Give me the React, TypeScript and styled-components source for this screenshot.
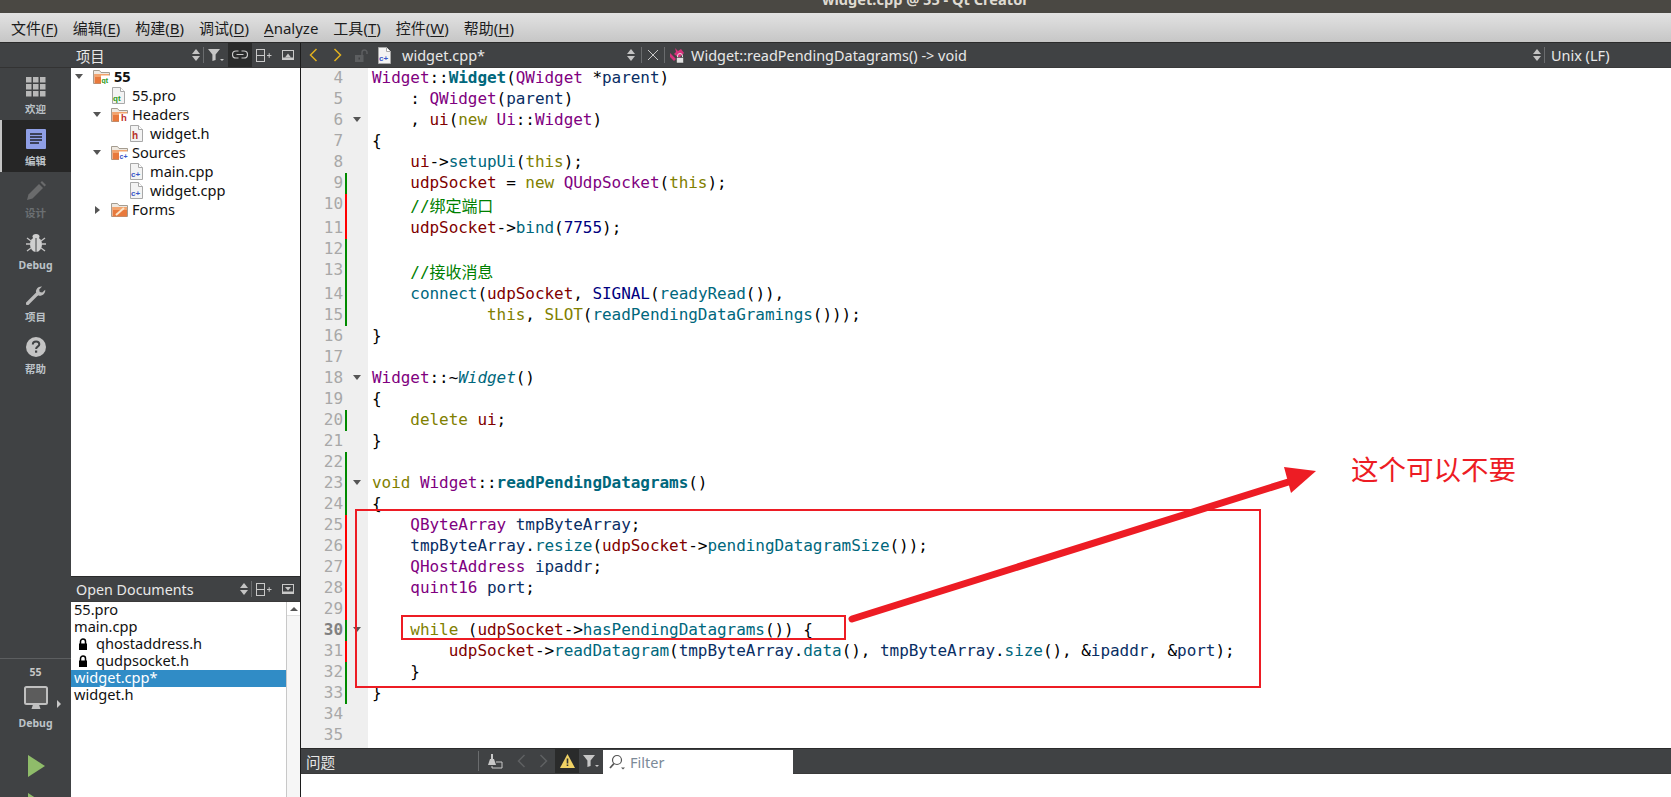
import React from "react";
import styled, { createGlobalStyle } from "styled-components";

const UI = `"Noto Sans", "Noto Sans CJK SC", sans-serif`;
const MONO = `"DejaVu Sans Mono", "Noto Sans CJK SC", monospace`;

const Global = createGlobalStyle`
  html, body { margin: 0; padding: 0; background: #fff; overflow: hidden; }
`;

const Root = styled.div`
  position: relative;
  width: 1671px;
  height: 797px;
  overflow: hidden;
  display: flex;
  flex-direction: column;
  font-family: ${UI};
`;
const TitleBar = styled.div`
  height: 13px;
  flex: none;
  background: #4a4843;
  overflow: hidden;
  padding-left: 822px;
`;
const TitleText = styled.div`
  margin-top: -11px;
  line-height: 20px;
  font-size: 14.6px;
  font-weight: 700;
  color: #dfdbd2;
  white-space: nowrap;
`;
const MenuBar = styled.div`
  height: 29px;
  flex: none;
  display: flex;
  align-items: center;
  padding-left: 11px;
  gap: 15px;
  background: linear-gradient(#e2e2e2, #c6c6c6);
`;
const MenuItem = styled.span`
  font-size: 15px;
  color: #1c1c1c;
  white-space: nowrap;
  u { text-underline-offset: 2px; }
`;
const Body = styled.div`
  flex: 1;
  min-height: 0;
  display: flex;
  border-top: 1px solid #2b2b2b;
`;
const Rail = styled.div`
  width: 71px;
  flex: none;
  background: #404244;
  display: flex;
  flex-direction: column;
  overflow: hidden;
`;
const RailHead = styled.div`
  height: 24px;
  flex: none;
  border-bottom: 1px solid #333;
`;
const RailItem = styled.div<{ $active?: boolean; $dim?: boolean }>`
  height: 52px;
  flex: none;
  box-sizing: border-box;
  display: flex;
  flex-direction: column;
  align-items: center;
  padding-top: 9px;
  gap: 6px;
  background: ${(p) => (p.$active ? "#262626" : "transparent")};
  border-left: 2px solid ${(p) => (p.$active ? "#c4c4c4" : "transparent")};
  opacity: ${(p) => (p.$dim ? 0.35 : 1)};
  svg { display: block; margin-left: -2px; }
`;
const RailLabel = styled.span`
  font-size: 10.5px;
  line-height: 13px;
  font-weight: 700;
  color: #bcc2c8;
  margin-left: -2px;
`;
const Kit = styled.div`
  margin-top: auto;
  height: 139px;
  flex: none;
  border-top: 1px solid #5c5e60;
  box-sizing: border-box;
  display: flex;
  flex-direction: column;
  align-items: center;
  overflow: hidden;
`;
const KitName = styled.span`
  font-size: 10.5px;
  line-height: 13px;
  font-weight: 700;
  color: #c8c8c8;
  margin-top: 7px;
`;
const KitScreen = styled.div`
  position: relative;
  height: 25px;
  margin-top: 7px;
  svg { display: block; }
`;
const KitCaret = styled.span`
  position: absolute;
  left: 33px;
  top: 14px;
  width: 0;
  height: 0;
  border-left: 4px solid #c8c8c8;
  border-top: 4px solid transparent;
  border-bottom: 4px solid transparent;
`;
const KitMode = styled(RailLabel)`
  margin: 6px 0 0;
`;
const PlayIcon = styled.svg`
  flex: none;
  margin-top: 25px;
  display: block;
`;
const PlaySecond = styled(PlayIcon)`
  margin-top: 16px;
`;
const Side = styled.div`
  width: 229px;
  flex: none;
  display: flex;
  flex-direction: column;
  border-right: 1px solid #1c1c1c;
`;
const Toolbar = styled.div`
  height: 24px;
  flex: none;
  display: flex;
  align-items: center;
  background: #404244;
  border-bottom: 1px solid #3a3a3a;
  color: #e8e8e8;
  font-size: 14.5px;
  white-space: nowrap;
`;
const SideTitle = styled.span`
  padding-left: 5px;
  font-size: 14.3px;
  flex: 1;
`;
const ToolIcon = styled.span<{ $w?: number; $active?: boolean }>`
  width: ${(p) => p.$w ?? 24}px;
  height: 24px;
  flex: none;
  display: flex;
  align-items: center;
  justify-content: center;
  background: ${(p) => (p.$active ? "#2a2b2b" : "transparent")};
`;
const Sep = styled.span<{ $h?: number }>`
  width: 1px;
  height: ${(p) => p.$h ?? 16}px;
  flex: none;
  background: #6a6c6e;
`;
const Tree = styled.div`
  flex: 1;
  min-height: 0;
  background: #fff;
  border-bottom: 1px solid #2b2b2b;
`;
const TreeRow = styled.div<{ $level: number }>`
  height: 19px;
  box-sizing: border-box;
  padding-bottom: 2px;
  display: flex;
  align-items: center;
  padding-left: ${(p) => 4 + p.$level * 18}px;
  font-size: 14.6px;
  color: #111;
  line-height: 17px;
`;
const TreeArrow = styled.span`
  width: 18px;
  flex: none;
  display: flex;
  align-items: center;
`;
const TreeIcon = styled.span`
  width: 21px;
  flex: none;
  display: flex;
  svg { display: block; }
`;
const TreeName = styled.span<{ $bold?: boolean }>`
  font-weight: ${(p) => (p.$bold ? 700 : 400)};
`;
const Docs = styled.div`
  height: 220px;
  flex: none;
  display: flex;
  flex-direction: column;
`;
const DocsBody = styled.div`
  flex: 1;
  min-height: 0;
  display: flex;
  background: #fff;
`;
const DocsList = styled.div`
  flex: 1;
  min-width: 0;
`;
const DocRow = styled.div<{ $selected?: boolean }>`
  height: 17px;
  box-sizing: border-box;
  padding-bottom: 2px;
  line-height: 15px;
  display: flex;
  align-items: center;
  padding-left: 3px;
  font-size: 14.6px;
  color: ${(p) => (p.$selected ? "#fff" : "#111")};
  background: ${(p) => (p.$selected ? "#308cc6" : "transparent")};
  svg { margin: 0 8px 0 4px; display: block; }
`;
const Scroll = styled.div`
  width: 14px;
  flex: none;
  box-sizing: border-box;
  border-left: 1px solid #c8c8c8;
  background: #f6f6f6;
`;
const ScrollBtn = styled.div`
  height: 13px;
  background: #fff;
  display: flex;
  align-items: center;
  justify-content: center;
  border-bottom: 1px solid #e0e0e0;
`;
const ScrollUp = styled.span`
  width: 0;
  height: 0;
  border-left: 4px solid transparent;
  border-right: 4px solid transparent;
  border-bottom: 4px solid #555;
`;
const EditorCol = styled.div`
  flex: 1;
  min-width: 0;
  display: flex;
  flex-direction: column;
`;
const NavBtn = styled(ToolIcon)`
  width: 24px;
`;
const FileName = styled.span`
  margin-left: 7px;
  width: 219px;
  flex: none;
  font-size: 14.5px;
`;
const Symbol = styled.span`
  flex: 1;
  font-size: 14.45px;
  margin-left: 2px;
`;
const LineEnding = styled.span`
  flex: none;
  width: 120px;
  margin-left: 6px;
  font-size: 14.45px;
`;
const Code = styled.div`
  flex: 1;
  min-height: 0;
  background: linear-gradient(to right, #efefef 67px, #fff 67px);
  font-family: ${MONO};
  font-size: 16px;
  letter-spacing: -0.05px;
  white-space: pre;
`;
const Line = styled.div<{ $tall?: boolean }>`
  display: flex;
  height: ${(p) => (p.$tall ? 24 : 21)}px;
  line-height: 20px;
`;
const Num = styled.span<{ $current?: boolean }>`
  width: 42px;
  flex: none;
  text-align: right;
  color: ${(p) => (p.$current ? "#808080" : "#a8a8a8")};
  font-weight: ${(p) => (p.$current ? 700 : 400)};
`;
const Change = styled.span<{ $c?: string }>`
  width: 2px;
  flex: none;
  margin-left: 2px;
  background: ${(p) => p.$c ?? "transparent"};
`;
const Fold = styled.span`
  width: 21px;
  flex: none;
  display: flex;
  align-items: center;
  justify-content: center;
  height: 19px;
`;
const FoldArrow = styled.span`
  width: 0;
  height: 0;
  margin-right: 1px;
  border-left: 4px solid transparent;
  border-right: 4px solid transparent;
  border-top: 5px solid #555;
`;
const TreeCaretDown = styled(FoldArrow)`
  margin: 0;
`;
const TreeCaretRight = styled.span`
  width: 0;
  height: 0;
  margin-left: 2px;
  border-top: 4px solid transparent;
  border-bottom: 4px solid transparent;
  border-left: 5px solid #555;
`;
const CodeText = styled.span<{ $tall?: boolean }>`
  padding-left: 4px;
  line-height: ${(p) => (p.$tall ? 26 : 20)}px;
`;
const colors: Record<string, string> = {
  t: "#800080",
  k: "#808000",
  f: "#00677c",
  m: "#800000",
  l: "#092e64",
  c: "#008000",
  n: "#000080",
  p: "#000000",
};
const Tok = styled.span<{ $k: string }>`
  color: ${(p) => colors[p.$k[0]]};
  font-weight: ${(p) => (p.$k.includes("b") ? 700 : 400)};
  font-style: ${(p) => (p.$k.includes("i") ? "italic" : "normal")};
`;
const Problems = styled(Toolbar)`
  height: 24px;
  border-top: 1px solid #2b2b2b;
`;
const ProblemsTitle = styled.span`
  padding-left: 5px;
  width: 172px;
  flex: none;
  font-size: 14.5px;
`;
const FilterBox = styled.div`
  width: 190px;
  height: 24px;
  flex: none;
  margin-left: 1px;
  background: #fff;
  display: flex;
  align-items: center;
  gap: 4px;
  padding-left: 6px;
  box-sizing: border-box;
  color: #7c8a98;
  font-size: 14.5px;
  margin-top: 1px;
`;
const Pane = styled.div`
  height: 23px;
  flex: none;
  background: #fff;
`;
const Box = styled.div<{ $x: number; $y: number; $w: number; $h: number }>`
  position: absolute;
  left: ${(p) => p.$x}px;
  top: ${(p) => p.$y}px;
  width: ${(p) => p.$w}px;
  height: ${(p) => p.$h}px;
  box-sizing: border-box;
  border: 2px solid #ed1c24;
`;
const ArrowLayer = styled.svg`
  position: absolute;
  left: 0;
  top: 0;
`;
const Note = styled.div`
  position: absolute;
  left: 1351px;
  top: 449px;
  font-family: "Noto Sans CJK SC", sans-serif;
  font-size: 27.5px;
  line-height: 38px;
  color: #ed1c24;
  white-space: nowrap;
`;

const UpDown = () => (
  <svg width="10" height="14" viewBox="0 0 10 14">
    <path d="M5 1 9 6H1z" fill="#c4c4c4" />
    <path d="M5 13 9 8H1z" fill="#c4c4c4" />
  </svg>
);
const Funnel = () => (
  <svg width="18" height="14" viewBox="0 0 18 14">
    <path d="M1 1h12L8.6 6.5V12L5.4 13V6.5z" fill="#c6c6c6" />
    <path d="M13 11h4l-2 2z" fill="#c6c6c6" />
  </svg>
);
const LinkIco = () => (
  <svg width="16" height="10" viewBox="0 0 16 10" fill="none" stroke="#c8c8c8" strokeWidth="1.2">
    <path d="M6.5 1H4a3 3 0 0 0 0 7h2.5M9.5 1H12a3 3 0 0 1 0 7H9.5M4.5 4.5h7" />
  </svg>
);
const SplitIco = () => (
  <svg width="16" height="13" viewBox="0 0 16 13" fill="none" stroke="#c8c8c8">
    <rect x=".5" y=".5" width="8" height="12" />
    <path d="M.5 6.5h8M11 6.5h4.5M13.2 4.2v4.6" />
  </svg>
);
const CloseBox = ({ down }: { down?: boolean }) => (
  <svg width="12" height="10" viewBox="0 0 12 10">
    <rect x=".5" y=".5" width="11" height="9" fill="none" stroke="#c8c8c8" />
    {down ? <path d="M3 3h6L6 6.500z" fill="#c8c8c8" /> : <path d="M3 7.500h6L6 3.500z" fill="#c8c8c8" />}
    <rect x="1" y="7.500" width="10" height="1.500" fill="#c8c8c8" />
  </svg>
);
const Chevron = ({ dir, color }: { dir: "l" | "r"; color: string }) => (
  <svg width="9" height="14" viewBox="0 0 9 14" fill="none" stroke={color} strokeWidth="1.5">
    <path d={dir === "l" ? "M7.500 1 1.500 7l6 6" : "M1.500 1l6 6-6 6"} />
  </svg>
);
const Padlock = () => (
  <svg width="10" height="12" viewBox="0 0 10 12">
    <path d="M2.500 6V3.500a2.500 2.500 0 0 1 5 0V6" fill="none" stroke="#000" strokeWidth="1.500" />
    <rect x="1" y="5.500" width="8" height="6.500" fill="#000" />
  </svg>
);
const OpenLock = () => (
  <svg width="14" height="13" viewBox="0 0 14 13">
    <path d="M8 6V3.500a2.500 2.500 0 0 1 5 0V5" fill="none" stroke="#5c5e60" strokeWidth="1.500" />
    <rect x="1" y="6" width="8.500" height="7" fill="#5c5e60" />
    <rect x="4.500" y="8.500" width="1.500" height="2" fill="#404244" />
  </svg>
);
const FileIco = ({ tag, color }: { tag: string; color: string }) => (
  <svg width="15" height="17" viewBox="0 0 15 17">
    <path d="M1.500.5h8l4 4v12h-12z" fill="#f3f3f3" stroke="#a8a8a8" />
    <path d="M9.500.5v4h4" fill="#fff" stroke="#a8a8a8" />
    <text x={tag === "h" ? 3 : 2} y="14" fontFamily="Liberation Sans" fontSize={tag === "h" ? 10 : 8} fontWeight="700" fill={color}>{tag}</text>
  </svg>
);
const FolderIco = ({ tag, color, pencil }: { tag?: string; color?: string; pencil?: boolean }) => (
  <svg width="17" height="15" viewBox="0 0 17 15">
    <path d="M.5 1.500h6l1.500 2h8.500v11H.5z" fill="#efe9e1" stroke="#a49c90" />
    <rect x="1.500" y="5" width="14.500" height="9.500" fill="#e8793c" />
    <rect x="1.500" y="5" width="14.500" height="3" fill="#f2a46e" />
    {pencil && <path d="M5 13l8-7" stroke="#fbe4c8" strokeWidth="2" />}
    {tag && (
      <>
        <rect x="8" y="6.500" width="9" height="8.500" fill="#fff" />
        <text x={tag === "h" ? 10 : 8.500} y="14" fontFamily="Liberation Sans" fontSize={tag === "h" ? 9.500 : 7} fontWeight="700" fill={color}>{tag}</text>
      </>
    )}
  </svg>
);

const GridIco = () => (
  <svg width="20" height="20" viewBox="0 0 20 20" fill="#b8b8b8">
    {[0, 7, 14].flatMap((y) => [0, 7, 14].map((x) => <rect key={`${x}-${y}`} x={x} y={y} width="5.500" height="5.500" />))}
  </svg>
);
const EditIco = () => (
  <svg width="20" height="20" viewBox="0 0 20 20">
    <rect width="20" height="20" rx="1" fill="#8f9fe6" />
    <path d="M4 5h12M4 8h12M4 11h12M4 14h9" stroke="#3c4258" strokeWidth="1.800" />
  </svg>
);
const PencilIco = () => (
  <svg width="20" height="20" viewBox="0 0 20 20" fill="#b8b8b8">
    <path d="M1 19l1.500-5.500L13 3l4 4L6.500 17.500z" />
    <path d="M14.500 1.500 16 0l4 4-1.500 1.500z" />
  </svg>
);
const BugIco = () => (
  <svg width="20" height="20" viewBox="0 0 20 20" fill="none" stroke="#c4c4c4" strokeWidth="1.300">
    <path d="M1 5l4 3M19 5l-4 3M0 11h4M20 11h-4M1 18l4-3M19 18l-4-3" />
    <ellipse cx="10" cy="11.500" rx="6" ry="7.500" fill="#cfcfcf" stroke="none" />
    <ellipse cx="10" cy="3.500" rx="3.500" ry="2.500" fill="#cfcfcf" stroke="none" />
    <path d="M10 5v14" stroke="#404244" strokeWidth="1" />
  </svg>
);
const WrenchIco = () => (
  <svg width="20" height="20" viewBox="0 0 20 20">
    <path d="M1.500 18.500 11 9" stroke="#bcbcbc" strokeWidth="3.200" strokeLinecap="round" />
    <path d="M10 7.500c-.5-3.500 2.500-6.500 6-6l-2.800 3 .5 2.500 2.500.5 3-2.800c.5 3.500-2.500 6.500-6.500 6z" fill="#bcbcbc" />
  </svg>
);
const HelpIco = () => (
  <svg width="20" height="20" viewBox="0 0 20 20">
    <circle cx="10" cy="10" r="10" fill="#c4c4c4" />
    <path d="M6.800 7.500c0-2 1.500-3 3.300-3s3.200 1.100 3.200 2.800c0 2.300-3.200 2.400-3.200 4.600" fill="none" stroke="#404244" strokeWidth="2" />
    <rect x="9" y="13.500" width="2.200" height="2.200" fill="#404244" />
  </svg>
);
const MonitorIco = () => (
  <svg width="24" height="25" viewBox="0 0 24 25">
    <rect x="1" y="1" width="22" height="17" rx="1.500" fill="#5c5c5c" stroke="#c0c0c0" strokeWidth="2" />
    <path d="M9 18.500h6l1.500 4.500H7.500z" fill="#c0c0c0" />
  </svg>
);
const Play = () => <path d="M1 0 18 11 1 22z" fill="#8fbc6a" />;
const Clean = () => (
  <svg width="16" height="15" viewBox="0 0 16 15">
    <path d="M4 0h2v5H4z" fill="#c8c8c8" />
    <path d="M1 11l2-6h4l2 6z" fill="#c8c8c8" />
    <path d="M9 8h6v6H5v-2" fill="none" stroke="#c8c8c8" />
  </svg>
);
const Warn = () => (
  <svg width="15" height="14" viewBox="0 0 15 14">
    <path d="M7.500 0 15 14H0z" fill="#f0d264" />
    <path d="M6.700 4.500h1.600v5H6.700zM6.700 10.500h1.600v1.600H6.700z" fill="#333" />
  </svg>
);
const Search = () => (
  <svg width="17" height="16" viewBox="0 0 17 16" fill="none" stroke="#555" strokeWidth="1.200">
    <circle cx="8" cy="6" r="4.500" />
    <path d="M5 9.500 1 14" strokeWidth="1.800" />
    <path d="M12 13.500h4l-2 2z" fill="#555" stroke="none" />
  </svg>
);
const SymbolIco = () => (
  <svg width="16" height="17" viewBox="0 0 16 17">
    <path d="M6 1l3 3 3-2 3 4-5 5-5-4 2-2z" fill="#d6337c" />
    <path d="M1 6l3 3 3 3-2 2-4-4z" fill="#d6337c" />
    <path d="M8.500 10.500V9a2.500 2.500 0 0 1 5 0v1.500" fill="none" stroke="#e0e0e0" />
    <rect x="7.500" y="10.500" width="7" height="5.500" fill="#e0e0e0" stroke="#333" strokeWidth=".5" />
  </svg>
);

type T = [string, string];
interface L {
  n: number;
  c?: string;
  fold?: boolean;
  tall?: boolean;
  cur?: boolean;
  t?: T[];
}
const G = "#008a00";
const R = "#ff0000";
const lines: L[] = [
  { n: 4, t: [["t", "Widget"], ["p", "::"], ["fb", "Widget"], ["p", "("], ["t", "QWidget"], ["p", " *"], ["l", "parent"], ["p", ")"]] },
  { n: 5, t: [["p", "    : "], ["t", "QWidget"], ["p", "("], ["l", "parent"], ["p", ")"]] },
  { n: 6, fold: true, t: [["p", "    , "], ["m", "ui"], ["p", "("], ["k", "new "], ["t", "Ui"], ["p", "::"], ["t", "Widget"], ["p", ")"]] },
  { n: 7, t: [["p", "{"]] },
  { n: 8, t: [["p", "    "], ["m", "ui"], ["p", "->"], ["f", "setupUi"], ["p", "("], ["k", "this"], ["p", ");"]] },
  { n: 9, c: G, t: [["p", "    "], ["m", "udpSocket"], ["p", " = "], ["k", "new "], ["t", "QUdpSocket"], ["p", "("], ["k", "this"], ["p", ");"]] },
  { n: 10, c: R, tall: true, t: [["c", "    //绑定端口"]] },
  { n: 11, c: R, t: [["p", "    "], ["m", "udpSocket"], ["p", "->"], ["f", "bind"], ["p", "("], ["n", "7755"], ["p", ");"]] },
  { n: 12, c: G },
  { n: 13, c: G, tall: true, t: [["c", "    //接收消息"]] },
  { n: 14, c: G, t: [["p", "    "], ["f", "connect"], ["p", "("], ["m", "udpSocket"], ["p", ", "], ["n", "SIGNAL"], ["p", "("], ["f", "readyRead"], ["p", "()),"]] },
  { n: 15, c: G, t: [["p", "            "], ["k", "this"], ["p", ", "], ["k", "SLOT"], ["p", "("], ["f", "readPendingDataGramings"], ["p", "()));"]] },
  { n: 16, t: [["p", "}"]] },
  { n: 17 },
  { n: 18, fold: true, t: [["t", "Widget"], ["p", "::~"], ["fi", "Widget"], ["p", "()"]] },
  { n: 19, t: [["p", "{"]] },
  { n: 20, c: G, t: [["p", "    "], ["k", "delete "], ["m", "ui"], ["p", ";"]] },
  { n: 21, t: [["p", "}"]] },
  { n: 22, c: G },
  { n: 23, c: G, fold: true, t: [["k", "void "], ["t", "Widget"], ["p", "::"], ["fb", "readPendingDatagrams"], ["p", "()"]] },
  { n: 24, c: G, t: [["p", "{"]] },
  { n: 25, c: R, t: [["p", "    "], ["t", "QByteArray"], ["l", " tmpByteArray"], ["p", ";"]] },
  { n: 26, c: R, t: [["p", "    "], ["l", "tmpByteArray"], ["p", "."], ["f", "resize"], ["p", "("], ["m", "udpSocket"], ["p", "->"], ["f", "pendingDatagramSize"], ["p", "());"]] },
  { n: 27, c: R, t: [["p", "    "], ["t", "QHostAddress"], ["l", " ipaddr"], ["p", ";"]] },
  { n: 28, c: R, t: [["p", "    "], ["t", "quint16"], ["l", " port"], ["p", ";"]] },
  { n: 29, c: R },
  { n: 30, c: G, fold: true, cur: true, t: [["p", "    "], ["k", "while"], ["p", " ("], ["m", "udpSocket"], ["p", "->"], ["f", "hasPendingDatagrams"], ["p", "()) {"]] },
  { n: 31, c: R, t: [["p", "        "], ["m", "udpSocket"], ["p", "->"], ["f", "readDatagram"], ["p", "("], ["l", "tmpByteArray"], ["p", "."], ["f", "data"], ["p", "(), "], ["l", "tmpByteArray"], ["p", "."], ["f", "size"], ["p", "(), &"], ["l", "ipaddr"], ["p", ", &"], ["l", "port"], ["p", ");"]] },
  { n: 32, c: G, t: [["p", "    }"]] },
  { n: 33, c: G, t: [["p", "}"]] },
  { n: 34 },
  { n: 35 },
];

const menus: [string, string][] = [
  ["文件", "F"],
  ["编辑", "E"],
  ["构建", "B"],
  ["调试", "D"],
];
const menus2: [string, string][] = [
  ["工具", "T"],
  ["控件", "W"],
  ["帮助", "H"],
];

export default function App() {
  return (
    <Root>
      <Global />
      <TitleBar>
        <TitleText>widget.cpp @ 55 - Qt Creator</TitleText>
      </TitleBar>
      <MenuBar>
        {menus.map(([a, b]) => (
          <MenuItem key={a}>{a}(<u>{b}</u>)</MenuItem>
        ))}
        <MenuItem><u>A</u>nalyze</MenuItem>
        {menus2.map(([a, b]) => (
          <MenuItem key={a}>{a}(<u>{b}</u>)</MenuItem>
        ))}
      </MenuBar>
      <Body>
        <Rail>
          <RailHead />
          <RailItem><GridIco /><RailLabel>欢迎</RailLabel></RailItem>
          <RailItem $active><EditIco /><RailLabel>编辑</RailLabel></RailItem>
          <RailItem $dim><PencilIco /><RailLabel>设计</RailLabel></RailItem>
          <RailItem><BugIco /><RailLabel>Debug</RailLabel></RailItem>
          <RailItem><WrenchIco /><RailLabel>项目</RailLabel></RailItem>
          <RailItem><HelpIco /><RailLabel>帮助</RailLabel></RailItem>
          <Kit>
            <KitName>55</KitName>
            <KitScreen><MonitorIco /><KitCaret /></KitScreen>
            <KitMode>Debug</KitMode>
            <PlayIcon width="18" height="22" viewBox="0 0 18 22"><Play /></PlayIcon>
            <PlaySecond width="18" height="22" viewBox="0 0 18 22"><Play /></PlaySecond>
          </Kit>
        </Rail>
        <Side>
          <Toolbar>
            <SideTitle>项目</SideTitle>
            <ToolIcon $w={14}><UpDown /></ToolIcon>
            <Sep />
            <ToolIcon $w={24}><Funnel /></ToolIcon>
            <ToolIcon $active><LinkIco /></ToolIcon>
            <ToolIcon><SplitIco /></ToolIcon>
            <ToolIcon $w={24}><CloseBox /></ToolIcon>
          </Toolbar>
          <Tree>
            <TreeRow $level={0}><TreeArrow><TreeCaretDown /></TreeArrow><TreeIcon><FolderIco tag="qt" color="#2a9a1a" /></TreeIcon><TreeName $bold>55</TreeName></TreeRow>
            <TreeRow $level={1}><TreeArrow /><TreeIcon><FileIco tag="qt" color="#2a9a1a" /></TreeIcon><TreeName>55.pro</TreeName></TreeRow>
            <TreeRow $level={1}><TreeArrow><TreeCaretDown /></TreeArrow><TreeIcon><FolderIco tag="h" color="#c0302a" /></TreeIcon><TreeName>Headers</TreeName></TreeRow>
            <TreeRow $level={2}><TreeArrow /><TreeIcon><FileIco tag="h" color="#b8302a" /></TreeIcon><TreeName>widget.h</TreeName></TreeRow>
            <TreeRow $level={1}><TreeArrow><TreeCaretDown /></TreeArrow><TreeIcon><FolderIco tag="c+" color="#3a56c8" /></TreeIcon><TreeName>Sources</TreeName></TreeRow>
            <TreeRow $level={2}><TreeArrow /><TreeIcon><FileIco tag="c+" color="#3a56c8" /></TreeIcon><TreeName>main.cpp</TreeName></TreeRow>
            <TreeRow $level={2}><TreeArrow /><TreeIcon><FileIco tag="c+" color="#3a56c8" /></TreeIcon><TreeName>widget.cpp</TreeName></TreeRow>
            <TreeRow $level={1}><TreeArrow><TreeCaretRight /></TreeArrow><TreeIcon><FolderIco pencil /></TreeIcon><TreeName>Forms</TreeName></TreeRow>
          </Tree>
          <Docs>
            <Toolbar>
              <SideTitle>Open Documents</SideTitle>
              <ToolIcon $w={14}><UpDown /></ToolIcon>
              <Sep />
              <ToolIcon><SplitIco /></ToolIcon>
              <ToolIcon $w={24}><CloseBox down /></ToolIcon>
            </Toolbar>
            <DocsBody>
              <DocsList>
                <DocRow>55.pro</DocRow>
                <DocRow>main.cpp</DocRow>
                <DocRow><Padlock />qhostaddress.h</DocRow>
                <DocRow><Padlock />qudpsocket.h</DocRow>
                <DocRow $selected>widget.cpp*</DocRow>
                <DocRow>widget.h</DocRow>
              </DocsList>
              <Scroll><ScrollBtn><ScrollUp /></ScrollBtn></Scroll>
            </DocsBody>
          </Docs>
        </Side>
        <EditorCol>
          <Toolbar>
            <NavBtn><Chevron dir="l" color="#e0b020" /></NavBtn>
            <NavBtn><Chevron dir="r" color="#e0b020" /></NavBtn>
            <NavBtn><OpenLock /></NavBtn>
            <ToolIcon $w={22}><FileIco tag="c+" color="#3a56c8" /></ToolIcon>
            <FileName>widget.cpp*</FileName>
            <ToolIcon $w={20}><UpDown /></ToolIcon>
            <Sep />
            <ToolIcon $w={22}>
              <svg width="12" height="12" viewBox="0 0 12 12" stroke="#c8c8c8" fill="none"><path d="M1 1l10 10M11 1 1 11" /></svg>
            </ToolIcon>
            <Sep />
            <ToolIcon $w={24}><SymbolIco /></ToolIcon>
            <Symbol>Widget::readPendingDatagrams() -&gt; void</Symbol>
            <ToolIcon $w={14}><UpDown /></ToolIcon>
            <Sep />
            <LineEnding>Unix (LF)</LineEnding>
          </Toolbar>
          <Code>
            {lines.map((l) => (
              <Line key={l.n} $tall={l.tall}>
                <Num $current={l.cur}>{l.n}</Num>
                <Change $c={l.c} />
                <Fold>{l.fold && <FoldArrow />}</Fold>
                <CodeText $tall={l.tall}>
                  {l.t?.map(([k, s], i) => (
                    <Tok key={i} $k={k}>{s}</Tok>
                  ))}
                </CodeText>
              </Line>
            ))}
          </Code>
          <Problems>
            <ProblemsTitle>问题</ProblemsTitle>
            <Sep $h={20} />
            <ToolIcon $w={32}><Clean /></ToolIcon>
            <ToolIcon $w={20}><Chevron dir="l" color="#5e6062" /></ToolIcon>
            <ToolIcon $w={24}><Chevron dir="r" color="#5e6062" /></ToolIcon>
            <ToolIcon $active $w={24}><Warn /></ToolIcon>
            <ToolIcon $w={23}><Funnel /></ToolIcon>
            <FilterBox><Search />Filter</FilterBox>
          </Problems>
          <Pane />
        </EditorCol>
      </Body>
      <Box $x={355} $y={509} $w={906} $h={179} />
      <Box $x={401} $y={615} $w={445} $h={25} />
      <ArrowLayer width="1671" height="797">
        <path d="M852 619 1298 479" stroke="#ed1c24" strokeWidth="7" strokeLinecap="round" />
        <path d="M1316 471 1284 467 1291 493z" fill="#ed1c24" />
      </ArrowLayer>
      <Note>这个可以不要</Note>
    </Root>
  );
}
